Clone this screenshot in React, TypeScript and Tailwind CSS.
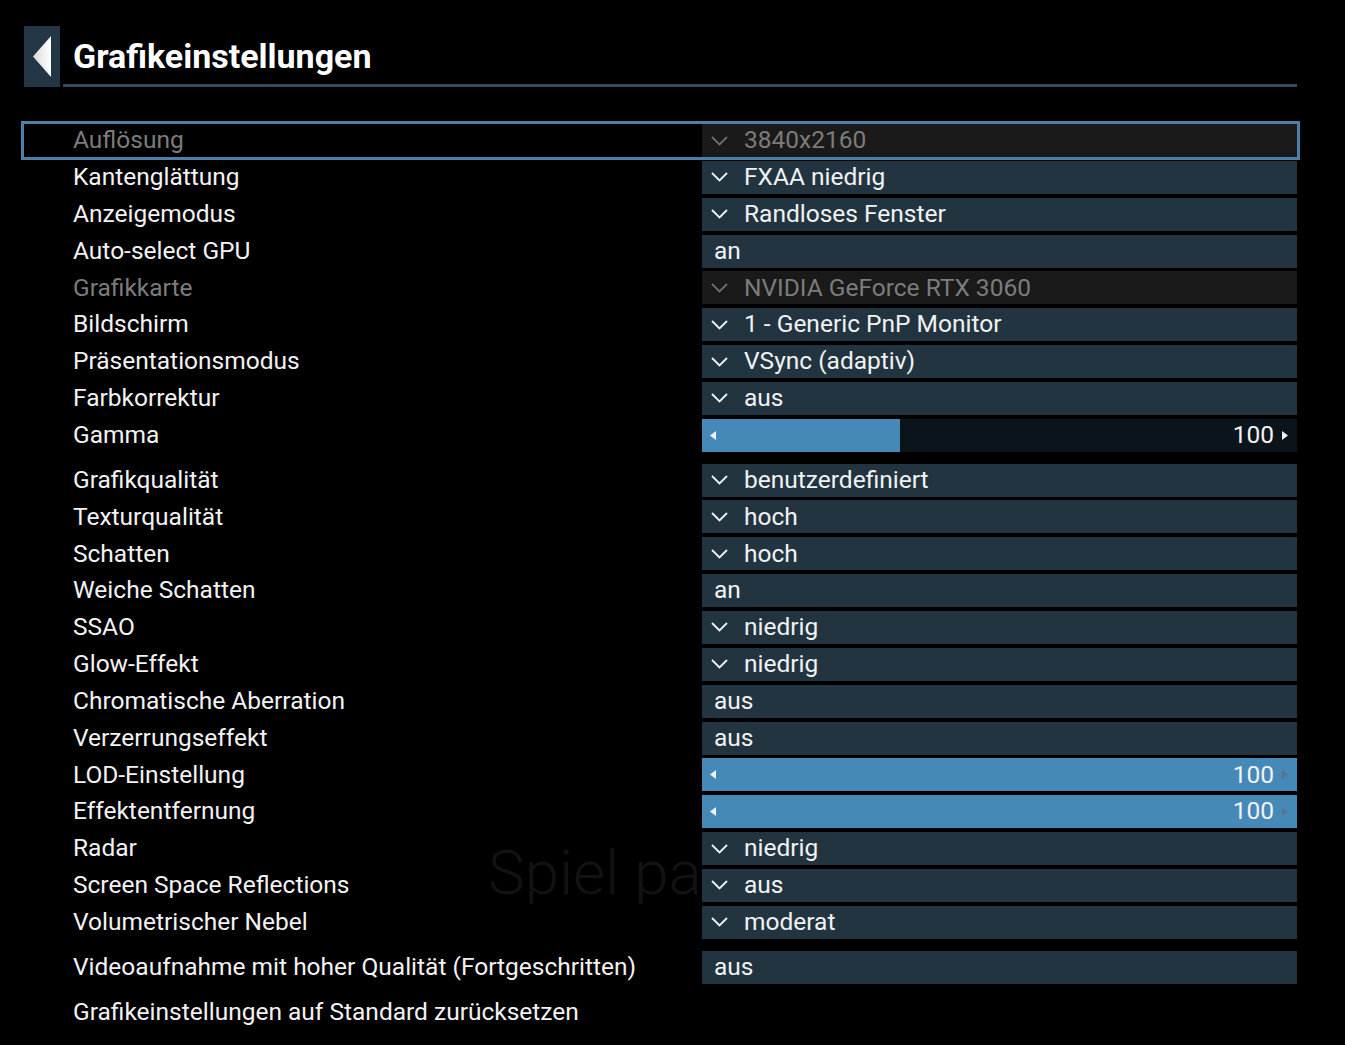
import React from "react";

type Row =
  | { kind: "select"; label: string; value: string; disabled?: boolean; focused?: boolean }
  | { kind: "toggle"; label: string; value: string }
  | { kind: "slider"; label: string; value: number; fill: number; atMax?: boolean }
  | { kind: "action"; label: string };

const display: Row[] = [
  { kind: "select", label: "Auflösung", value: "3840x2160", disabled: true, focused: true },
  { kind: "select", label: "Kantenglättung", value: "FXAA niedrig" },
  { kind: "select", label: "Anzeigemodus", value: "Randloses Fenster" },
  { kind: "toggle", label: "Auto-select GPU", value: "an" },
  { kind: "select", label: "Grafikkarte", value: "NVIDIA GeForce RTX 3060", disabled: true },
  { kind: "select", label: "Bildschirm", value: "1 - Generic PnP Monitor" },
  { kind: "select", label: "Präsentationsmodus", value: "VSync (adaptiv)" },
  { kind: "select", label: "Farbkorrektur", value: "aus" },
  { kind: "slider", label: "Gamma", value: 100, fill: 33.3 },
];

const quality: Row[] = [
  { kind: "select", label: "Grafikqualität", value: "benutzerdefiniert" },
  { kind: "select", label: "Texturqualität", value: "hoch" },
  { kind: "select", label: "Schatten", value: "hoch" },
  { kind: "toggle", label: "Weiche Schatten", value: "an" },
  { kind: "select", label: "SSAO", value: "niedrig" },
  { kind: "select", label: "Glow-Effekt", value: "niedrig" },
  { kind: "toggle", label: "Chromatische Aberration", value: "aus" },
  { kind: "toggle", label: "Verzerrungseffekt", value: "aus" },
  { kind: "slider", label: "LOD-Einstellung", value: 100, fill: 100, atMax: true },
  { kind: "slider", label: "Effektentfernung", value: 100, fill: 100, atMax: true },
  { kind: "select", label: "Radar", value: "niedrig" },
  { kind: "select", label: "Screen Space Reflections", value: "aus" },
  { kind: "select", label: "Volumetrischer Nebel", value: "moderat" },
];

const extra: Row[] = [
  { kind: "toggle", label: "Videoaufnahme mit hoher Qualität (Fortgeschritten)", value: "aus" },
];

function Chevron({ dim }: { dim?: boolean }) {
  return (
    <svg width="17" height="10" viewBox="0 0 17 10" className="shrink-0">
      <polyline
        points="1,1 8.5,8.5 16,1"
        fill="none"
        stroke={dim ? "#6f6f6f" : "#f2f2f2"}
        strokeWidth="1.8"
      />
    </svg>
  );
}

function ArrowLeft() {
  return (
    <svg width="6" height="9" viewBox="0 0 6 9" className="shrink-0">
      <polygon points="6,0 6,9 0,4.5" fill="#eef2f5" />
    </svg>
  );
}

function ArrowRight({ dim }: { dim?: boolean }) {
  return (
    <svg width="6" height="9" viewBox="0 0 6 9" className="shrink-0">
      <polygon points="0,0 0,9 6,4.5" fill={dim ? "#5d7485" : "#eef2f5"} />
    </svg>
  );
}

function Value({ row }: { row: Row }) {
  if (row.kind === "select") {
    return (
      <div
        className={`flex h-[33px] w-[595px] items-center pl-[9px] ${
          row.disabled ? "bg-[#1a1a1a] text-[#7c7c7c]" : "bg-[#233441] text-[#f2f2f2]"
        }`}
      >
        <Chevron dim={row.disabled} />
        <span className="ml-[16px]">{row.value}</span>
      </div>
    );
  }
  if (row.kind === "toggle") {
    return (
      <div className="flex h-[33px] w-[595px] items-center bg-[#233441] pl-[12px] text-[#f2f2f2]">
        {row.value}
      </div>
    );
  }
  if (row.kind === "slider") {
    return (
      <div className="relative flex h-[33px] w-[595px] items-center bg-[#0b141a] text-[#f2f2f2]">
        <div className="absolute inset-y-0 left-0 bg-[#4589b9]" style={{ width: `${row.fill}%` }} />
        <div className="relative flex w-full items-center pl-[8px] pr-[9px]">
          <ArrowLeft />
          <span className="ml-auto mr-[8px]">{row.value}</span>
          <ArrowRight dim={row.atMax} />
        </div>
      </div>
    );
  }
  return null;
}

function SettingRow({ row }: { row: Row }) {
  const dim = row.kind === "select" && row.disabled;
  const focused = row.kind === "select" && row.focused;
  return (
    <div
      className={`flex h-[33px] items-center ${
        focused ? "outline-[3px] outline-solid outline-[#4b80aa]" : ""
      }`}
    >
      <div className={`w-[678px] pl-[49px] ${dim ? "text-[#7c7c7c]" : "text-[#f2f2f2]"}`}>
        {row.label}
      </div>
      {row.kind !== "action" && <Value row={row} />}
    </div>
  );
}

function Group({ rows }: { rows: Row[] }) {
  return (
    <div className="flex flex-col gap-y-[3.85px]">
      {rows.map((r) => (
        <SettingRow key={r.label} row={r} />
      ))}
    </div>
  );
}

export default function App() {
  return (
    <div
      className="relative h-[1045px] w-[1345px] overflow-hidden bg-black text-[24.5px] leading-none"
      style={{ fontFamily: "Roboto, 'Noto Sans', sans-serif" }}
    >
      <div className="pointer-events-none absolute left-[488px] top-[842px] w-[214px] overflow-hidden whitespace-nowrap text-[62px] font-light text-[#121212]">
        Spiel pausiert
      </div>

      <div className="relative flex flex-col pl-[24px] pt-[26px]">
        {/* header */}
        <div className="flex h-[61px] w-[1273px]">
          <button className="flex h-[61px] w-[36px] items-center justify-center bg-[#233645]">
            <svg width="18" height="41" viewBox="0 0 18 41">
              <defs>
                <linearGradient id="backArrow" x1="0" x2="1" y1="0" y2="0">
                  <stop offset="0" stopColor="#d9d9d9" />
                  <stop offset="1" stopColor="#ffffff" />
                </linearGradient>
              </defs>
              <polygon points="18,0 18,41 0,20.5" fill="url(#backArrow)" />
            </svg>
          </button>
          <div className="ml-[3px] flex flex-1 flex-col justify-end border-b-[3px] border-[#34495b]">
            <h1 className="mb-[11px] pl-[10px] text-[34px] font-bold text-white">
              Grafikeinstellungen
            </h1>
          </div>
        </div>

        <div className="mt-[37px] flex w-[1273px] flex-col">
          <Group rows={display} />
          <div className="mt-[11.85px]">
            <Group rows={quality} />
          </div>
          <div className="mt-[11.85px]">
            <Group rows={extra} />
          </div>
          <div className="mt-[11.85px]">
            <SettingRow row={{ kind: "action", label: "Grafikeinstellungen auf Standard zurücksetzen" }} />
          </div>
        </div>
      </div>
    </div>
  );
}
